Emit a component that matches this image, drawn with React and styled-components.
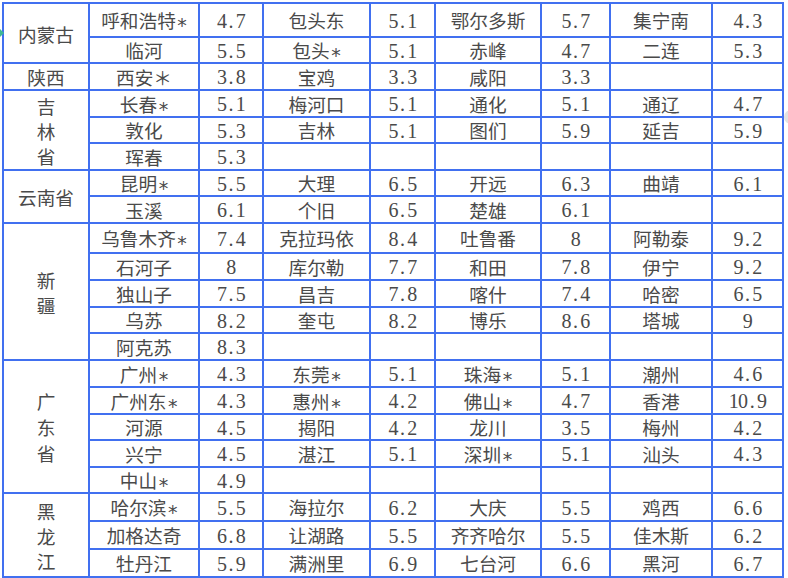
import React from 'react';
import styled, { createGlobalStyle } from 'styled-components';

const Global = createGlobalStyle`
  html, body { margin: 0; padding: 0; background: #fff; }
  body { font-family: "Noto Sans CJK SC", "Noto Sans", sans-serif; }
`;

const Page = styled.div`
  position: relative;
  width: 788px;
  height: 578px;
  box-sizing: border-box;
  padding: 2px 0 0 2px;
  overflow: hidden;
  background: #fff;
`;

const Table = styled.table`
  border-collapse: collapse;
  table-layout: fixed;
  width: 782px;
  color: #4a4a4a;
  font-size: 18.67px;
`;

const Row = styled.tr`
  height: ${(p) => p.$h}px;
`;

const Cell = styled.td`
  border: 2px solid #4170f0;
  padding: 0;
  text-align: center;
  vertical-align: middle;
  line-height: 20px;
  white-space: nowrap;
`;

const Province = styled(Cell)`
  line-height: ${(p) => p.$lh || 25}px;
`;

const Line = styled.div`
  display: block;
`;

const Star = styled.span`
  display: inline-block;
  position: relative;
  top: 4px;
  font-family: "DejaVu Sans", sans-serif;
  font-size: 19px;
  line-height: 16px;
  margin-left: 1.5px;
`;

const Num = styled.span`
  display: inline-flex;
  justify-content: center;
  font-family: "Liberation Serif", "Times New Roman", serif;
  font-size: 20px;
  line-height: 20px;
`;

const Glyph = styled.span`
  display: inline-block;
  width: 9.4px;
  text-align: center;
`;

const TealMark = styled.div`
  position: absolute;
  left: -8px;
  top: 28px;
  width: 10px;
  height: 10px;
  background: #3fb895;
  transform: rotate(45deg);
`;

const FloatDot = styled.div`
  position: absolute;
  left: 784px;
  top: 110px;
  width: 14px;
  height: 14px;
  border-radius: 50%;
  background: #e2e2e2;
`;

const widths = [86, 110, 64, 107, 65, 106, 69, 102, 71];

const groups = [
  {
    name: '内蒙古',
    rows: [
      ['呼和浩特*', '4.7', '包头东', '5.1', '鄂尔多斯', '5.7', '集宁南', '4.3'],
      ['临河', '5.5', '包头*', '5.1', '赤峰', '4.7', '二连', '5.3'],
    ],
  },
  {
    name: '陕西',
    rows: [['西安＊', '3.8', '宝鸡', '3.3', '咸阳', '3.3', '', '']],
  },
  {
    name: '吉林省',
    stack: true,
    rows: [
      ['长春*', '5.1', '梅河口', '5.1', '通化', '5.1', '通辽', '4.7'],
      ['敦化', '5.3', '吉林', '5.1', '图们', '5.9', '延吉', '5.9'],
      ['珲春', '5.3', '', '', '', '', '', ''],
    ],
  },
  {
    name: '云南省',
    rows: [
      ['昆明*', '5.5', '大理', '6.5', '开远', '6.3', '曲靖', '6.1'],
      ['玉溪', '6.1', '个旧', '6.5', '楚雄', '6.1', '', ''],
    ],
  },
  {
    name: '新疆',
    stack: true,
    rows: [
      ['乌鲁木齐*', '7.4', '克拉玛依', '8.4', '吐鲁番', '8', '阿勒泰', '9.2'],
      ['石河子', '8', '库尔勒', '7.7', '和田', '7.8', '伊宁', '9.2'],
      ['独山子', '7.5', '昌吉', '7.8', '喀什', '7.4', '哈密', '6.5'],
      ['乌苏', '8.2', '奎屯', '8.2', '博乐', '8.6', '塔城', '9'],
      ['阿克苏', '8.3', '', '', '', '', '', ''],
    ],
  },
  {
    name: '广东省',
    stack: true,
    lh: 26,
    rows: [
      ['广州*', '4.3', '东莞*', '5.1', '珠海*', '5.1', '潮州', '4.6'],
      ['广州东*', '4.3', '惠州*', '4.2', '佛山*', '4.7', '香港', '10.9'],
      ['河源', '4.5', '揭阳', '4.2', '龙川', '3.5', '梅州', '4.2'],
      ['兴宁', '4.5', '湛江', '5.1', '深圳*', '5.1', '汕头', '4.3'],
      ['中山*', '4.9', '', '', '', '', '', ''],
    ],
  },
  {
    name: '黑龙江',
    stack: true,
    rows: [
      ['哈尔滨*', '5.5', '海拉尔', '6.2', '大庆', '5.5', '鸡西', '6.6'],
      ['加格达奇', '6.8', '让湖路', '5.5', '齐齐哈尔', '5.5', '佳木斯', '6.2'],
      ['牡丹江', '5.9', '满洲里', '6.9', '七台河', '6.6', '黑河', '6.7'],
    ],
  },
];

const heights = [34, 26, 27, 27, 26, 27, 26, 27, 30, 27, 27, 26, 27, 27, 27, 26, 27, 26, 28, 28, 28];

function Value({ text }) {
  if (!text) return null;
  return (
    <Num>
      {text.split('').map((c, i) => (
        <Glyph key={i}>{c}</Glyph>
      ))}
    </Num>
  );
}

function City({ text }) {
  if (!text.endsWith('*')) return text;
  return (
    <>
      {text.slice(0, -1)}
      <Star>*</Star>
    </>
  );
}

export default function App() {
  let idx = 0;
  return (
    <Page>
      <Global />
      <Table>
        <colgroup>
          {widths.map((w, i) => (
            <col key={i} style={{ width: w }} />
          ))}
        </colgroup>
        <tbody>
          {groups.map((g) =>
            g.rows.map((r, ri) => {
              const h = heights[idx++];
              return (
                <Row key={g.name + ri} $h={h}>
                  {ri === 0 && (
                    <Province rowSpan={g.rows.length} $lh={g.lh}>
                      {g.stack
                        ? g.name.split('').map((c, i) => <Line key={i}>{c}</Line>)
                        : g.name}
                    </Province>
                  )}
                  {r.map((v, ci) => (
                    <Cell key={ci}>
                      {ci % 2 === 1 ? <Value text={v} /> : <City text={v} />}
                    </Cell>
                  ))}
                </Row>
              );
            })
          )}
        </tbody>
      </Table>
      <TealMark />
      <FloatDot />
    </Page>
  );
}
